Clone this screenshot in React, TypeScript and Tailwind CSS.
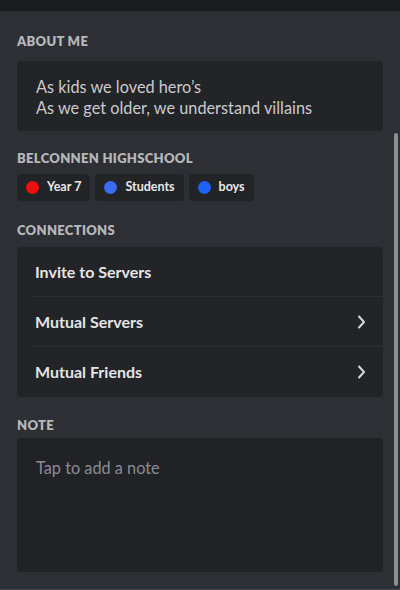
const font = { fontFamily: "Lato, 'Noto Sans', sans-serif" };

type Role = { name: string; color: string };

const roles: Role[] = [
  { name: "Year 7", color: "bg-[#f00f0f]" },
  { name: "Students", color: "bg-[#3b6cf0]" },
  { name: "boys", color: "bg-[#1c62f5]" },
];

function Heading({ children }: { children: string }) {
  return (
    <h2 className="text-[13px] font-extrabold uppercase leading-4 tracking-[0.3px] text-[#b5b7bb]">
      {children}
    </h2>
  );
}

function Chevron() {
  return (
    <svg width="9" height="14" viewBox="0 0 9 14" fill="none">
      <path
        d="M2 1.5 L7 7 L2 12.5"
        stroke="#d6d7da"
        strokeWidth="2"
        strokeLinecap="round"
        strokeLinejoin="round"
      />
    </svg>
  );
}

function ConnectionRow({
  label,
  arrow,
  last,
}: {
  label: string;
  arrow?: boolean;
  last?: boolean;
}) {
  return (
    <div className="pl-[16px]">
      <div
        className={`flex h-[50px] items-center justify-between pl-[2px] pr-[17px] ${
          last ? "" : "border-b border-[#2d2e33]"
        }`}
      >
        <span className="text-[16px] font-bold text-[#e3e4e6]">{label}</span>
        {arrow && <Chevron />}
      </div>
    </div>
  );
}

export default function App() {
  return (
    <div
      className="relative h-[590px] w-[400px] overflow-hidden bg-[#2e2f34]"
      style={font}
    >
      {/* Top strip */}
      <div className="h-[11px] bg-[#1b1c20]" />

      <div className="px-[17px] pt-[22px]">
        {/* About me */}
        <Heading>About Me</Heading>
        <div className="mt-[12px] h-[70px] rounded-[4px] bg-[#232428] px-[19px] pt-[15px] text-[16.3px] leading-[21px] text-[#c9cacd]">
          <p>As kids we loved hero’s</p>
          <p>As we get older, we understand villains</p>
        </div>

        {/* Roles */}
        <div className="mt-[19px]">
          <Heading>Belconnen Highschool</Heading>
        </div>
        <div className="mt-[8px] flex gap-[5px]">
          {roles.map((role) => (
            <div
              key={role.name}
              className="flex h-[27px] items-center gap-[8px] rounded-[4px] bg-[#232428] pl-[9px] pr-[9px]"
            >
              <span className={`h-[13px] w-[13px] rounded-full ${role.color}`} />
              <span className="text-[12.5px] font-bold text-[#e6e7e9]">
                {role.name}
              </span>
            </div>
          ))}
        </div>

        {/* Connections */}
        <div className="mt-[21px]">
          <Heading>Connections</Heading>
        </div>
        <div className="mt-[9px] rounded-[4px] bg-[#232428]">
          <ConnectionRow label="Invite to Servers" />
          <ConnectionRow label="Mutual Servers" arrow />
          <ConnectionRow label="Mutual Friends" arrow last />
        </div>

        {/* Note */}
        <div className="mt-[20px]">
          <Heading>Note</Heading>
        </div>
        <div className="mt-[5px] h-[134px] rounded-[4px] bg-[#212226] px-[19px] pt-[18px]">
          <p className="text-[16.3px] text-[#8a8c91]">Tap to add a note</p>
        </div>
      </div>

      {/* Scrollbar */}
      <div className="absolute right-[2px] top-[133px] h-[453px] w-[4px] rounded-full bg-[#8c8d91]" />
      <div className="absolute bottom-0 left-0 h-[1px] w-full bg-[#45464b]" />
    </div>
  );
}
